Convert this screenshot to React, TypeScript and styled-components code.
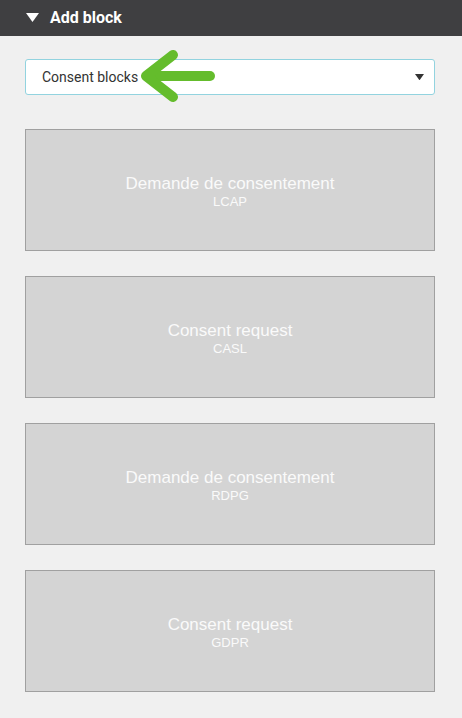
import React from "react";
import styled, { createGlobalStyle } from "styled-components";

const GlobalStyle = createGlobalStyle`
  html, body {
    margin: 0;
    padding: 0;
    background: #f0f0f0;
  }
  body {
    font-family: Roboto, "Liberation Sans", Arial, sans-serif;
  }
`;

const Panel = styled.div`
  width: 462px;
  min-height: 718px;
  background: #f0f0f0;
`;

const Header = styled.div`
  height: 36px;
  background: #3f3f41;
  display: flex;
  align-items: center;
  padding-left: 26px;
  gap: 11px;
  box-sizing: border-box;
`;

const HeaderTitle = styled.span`
  color: #ffffff;
  font-family: Roboto, sans-serif;
  font-weight: 700;
  font-size: 16px;
  line-height: 36px;
`;

const Body = styled.div`
  display: flex;
  flex-direction: column;
  padding: 23px 27px 0 25px;
`;

const SelectWrap = styled.div`
  position: relative;
  margin-bottom: 34px;
`;

const SelectBox = styled.div`
  height: 36px;
  box-sizing: border-box;
  border: 1px solid #92d3df;
  border-radius: 3px;
  background: #ffffff;
  display: flex;
  align-items: center;
  justify-content: space-between;
  padding: 0 10px 0 16px;
`;

const SelectText = styled.span`
  font-family: Roboto, sans-serif;
  font-size: 14px;
  color: #333333;
`;

const Pointer = styled.svg`
  position: absolute;
  left: 87px;
  top: -11px;
`;

const BlockList = styled.div`
  display: flex;
  flex-direction: column;
  gap: 25px;
`;

const Block = styled.div`
  height: 122px;
  box-sizing: border-box;
  border: 1px solid #a0a0a0;
  background: #d4d4d4;
  display: flex;
  flex-direction: column;
  align-items: center;
  justify-content: center;
  padding-top: 4px;
  font-family: "Liberation Sans", Arial, sans-serif;
  color: #fafafa;
`;

const BlockTitle = styled.div`
  font-size: 17px;
  line-height: 20px;
`;

const BlockSub = styled.div`
  font-size: 13px;
  line-height: 16px;
`;

const blocks = [
  { title: "Demande de consentement", sub: "LCAP" },
  { title: "Consent request", sub: "CASL" },
  { title: "Demande de consentement", sub: "RDPG" },
  { title: "Consent request", sub: "GDPR" },
];

const Triangle = ({ size, color }: { size: number; color: string }) => (
  <svg width={size} height={size * 0.7} viewBox="0 0 10 7">
    <polygon points="0,0 10,0 5,7" fill={color} />
  </svg>
);

export default function App() {
  return (
    <Panel>
      <GlobalStyle />
      <Header>
        <Triangle size={13} color="#ffffff" />
        <HeaderTitle>Add block</HeaderTitle>
      </Header>
      <Body>
        <SelectWrap>
          <SelectBox>
            <SelectText>Consent blocks</SelectText>
            <Triangle size={9} color="#333333" />
          </SelectBox>
          <Pointer width="110" height="56" viewBox="0 0 110 56">
            <g
              stroke="#64bc2c"
              strokeWidth="10"
              strokeLinecap="round"
              strokeLinejoin="round"
              fill="none"
            >
              <line x1="37" y1="28" x2="98" y2="28" />
              <polyline points="61,7 34,28 61,49" />
            </g>
          </Pointer>
        </SelectWrap>
        <BlockList>
          {blocks.map((b, i) => (
            <Block key={i}>
              <BlockTitle>{b.title}</BlockTitle>
              <BlockSub>{b.sub}</BlockSub>
            </Block>
          ))}
        </BlockList>
      </Body>
    </Panel>
  );
}
